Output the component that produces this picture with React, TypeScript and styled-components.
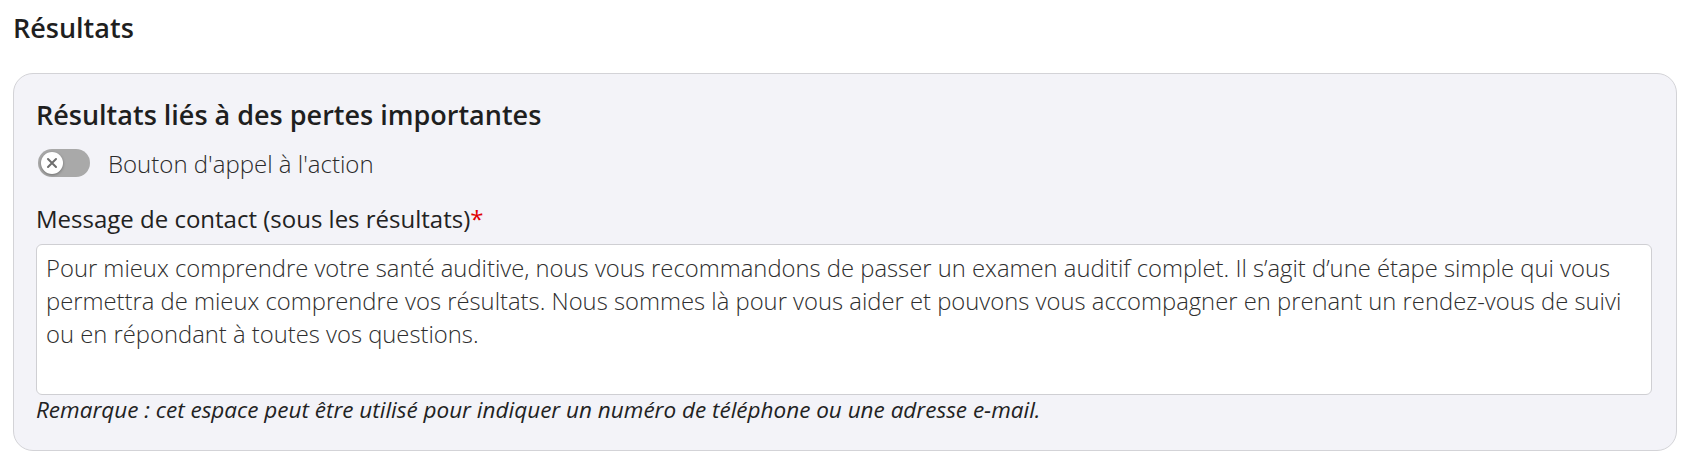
import React from 'react';
import styled, { createGlobalStyle } from 'styled-components';

const GlobalStyle = createGlobalStyle`
  body {
    margin: 0;
    background: #ffffff;
    font-family: 'Open Sans', 'Noto Sans', sans-serif;
    color: #222222;
  }
`;

const Page = styled.div`
  padding: 10px 9px 0 13px;
`;

const PageTitle = styled.h2`
  font-size: 27px;
  font-weight: 600;
  line-height: 36px;
  margin: 0 0 27px 0;
  color: #1f1f1f;
`;

const Card = styled.section`
  background: #f3f3f8;
  border: 1px solid #d3d3d7;
  border-radius: 20px;
  padding: 23px 24px 25px 22px;
`;

const CardTitle = styled.h3`
  font-size: 27px;
  font-weight: 600;
  line-height: 36px;
  margin: 0;
  color: #1f1f1f;
`;

const ToggleRow = styled.label`
  display: flex;
  align-items: center;
  gap: 18px;
  height: 32px;
  margin-top: 14px;
  padding-left: 2px;
  font-size: 24px;
  font-weight: 300;
  color: #2a2a2a;
`;

const Track = styled.span<{ $on?: boolean }>`
  position: relative;
  width: 52px;
  height: 28px;
  border-radius: 14px;
  background: ${(p) => (p.$on ? '#36477f' : '#a9a9a9')};
  flex-shrink: 0;
`;

const Knob = styled.span`
  position: absolute;
  top: 3px;
  left: 3px;
  width: 22px;
  height: 22px;
  border-radius: 50%;
  background: #ffffff;
  box-shadow: 0 1px 3px rgba(0, 0, 0, 0.35);
  display: flex;
  align-items: center;
  justify-content: center;
`;

const FieldLabel = styled.div`
  margin-top: 24px;
  font-size: 24px;
  line-height: 32px;
  font-weight: 400;
  color: #222222;
`;

const Required = styled.span`
  color: #e00000;
`;

const MessageBox = styled.div`
  margin-top: 9px;
  height: 151px;
  box-sizing: border-box;
  background: #ffffff;
  border: 1px solid #cfcfd3;
  border-radius: 6px;
  padding: 7px 10px 0 9px;
  font-size: 23.8px;
  font-weight: 300;
  line-height: 33px;
  color: #2e2e2e;
`;

const Note = styled.div`
  font-size: 22.5px;
  line-height: 30px;
  font-style: italic;
  color: #222222;
`;

export default function App() {
  return (
    <>
      <GlobalStyle />
      <Page>
        <PageTitle>Résultats</PageTitle>
        <Card>
          <CardTitle>Résultats liés à des pertes importantes</CardTitle>
          <ToggleRow>
            <Track>
              <Knob>
                <svg width="14" height="14" viewBox="0 0 14 14">
                  <path d="M3 3 L11 11 M11 3 L3 11" stroke="#6e6e6e" strokeWidth="2" strokeLinecap="round" />
                </svg>
              </Knob>
            </Track>
            Bouton d'appel à l'action
          </ToggleRow>
          <FieldLabel>
            Message de contact (sous les résultats)<Required>*</Required>
          </FieldLabel>
          <MessageBox>
            Pour mieux comprendre votre santé auditive, nous vous recommandons de passer un examen auditif complet. Il s’agit d’une étape simple qui vous permettra de mieux comprendre vos résultats. Nous sommes là pour vous aider et pouvons vous accompagner en prenant un rendez-vous de suivi ou en répondant à toutes vos questions.
          </MessageBox>
          <Note>
            Remarque : cet espace peut être utilisé pour indiquer un numéro de téléphone ou une adresse e-mail.
          </Note>
        </Card>
      </Page>
    </>
  );
}
